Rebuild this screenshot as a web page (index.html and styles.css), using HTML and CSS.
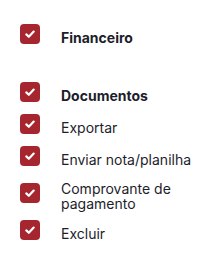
FILE: index.html
```html
<!DOCTYPE html>
<html lang="pt-BR">
<head>
<meta charset="utf-8">
<title>Permissões</title>
<link rel="stylesheet" href="styles.css">
</head>
<body>
<div class="perm">
  <div class="row section">
    <span class="box"><svg viewBox="0 0 20 20" width="20" height="20"><polyline points="6.3,10.4 8.8,12.8 13.7,7.6" /></svg></span>
    <span class="label bold">Financeiro</span>
  </div>
  <div class="group">
    <div class="row">
      <span class="box"><svg viewBox="0 0 20 20" width="20" height="20"><polyline points="6.3,10.4 8.8,12.8 13.7,7.6" /></svg></span>
      <span class="label bold">Documentos</span>
    </div>
    <div class="row">
      <span class="box"><svg viewBox="0 0 20 20" width="20" height="20"><polyline points="6.3,10.4 8.8,12.8 13.7,7.6" /></svg></span>
      <span class="label">Exportar</span>
    </div>
    <div class="row">
      <span class="box"><svg viewBox="0 0 20 20" width="20" height="20"><polyline points="6.3,10.4 8.8,12.8 13.7,7.6" /></svg></span>
      <span class="label">Enviar nota/planilha</span>
    </div>
    <div class="row">
      <span class="box"><svg viewBox="0 0 20 20" width="20" height="20"><polyline points="6.3,10.4 8.8,12.8 13.7,7.6" /></svg></span>
      <span class="label">Comprovante de pagamento</span>
    </div>
    <div class="row">
      <span class="box"><svg viewBox="0 0 20 20" width="20" height="20"><polyline points="6.3,10.4 8.8,12.8 13.7,7.6" /></svg></span>
      <span class="label">Excluir</span>
    </div>
  </div>
</div>
</body>
</html>
```

FILE: styles.css
```css
html, body {
  margin: 0;
  padding: 0;
  background: #ffffff;
}

body {
  font-family: Inter, "Liberation Sans", sans-serif;
  color: #1d1d2b;
}

.perm {
  display: flex;
  flex-direction: column;
  gap: 38px;
  padding: 24px 20px 0 20px;
}

.group {
  display: flex;
  flex-direction: column;
  gap: 12px;
}

.row {
  display: flex;
  align-items: center;
  gap: 21px;
}

.box {
  flex: 0 0 20px;
  width: 20px;
  height: 20px;
  border-radius: 4px;
  background: #a62630;
  display: flex;
}

.box svg polyline {
  fill: none;
  stroke: #ffffff;
  stroke-width: 2.2;
  stroke-linecap: round;
  stroke-linejoin: round;
}

.label {
  font-size: 14px;
  line-height: 15px;
  transform: translateY(3px);
}

.bold {
  font-weight: 700;
}
```
